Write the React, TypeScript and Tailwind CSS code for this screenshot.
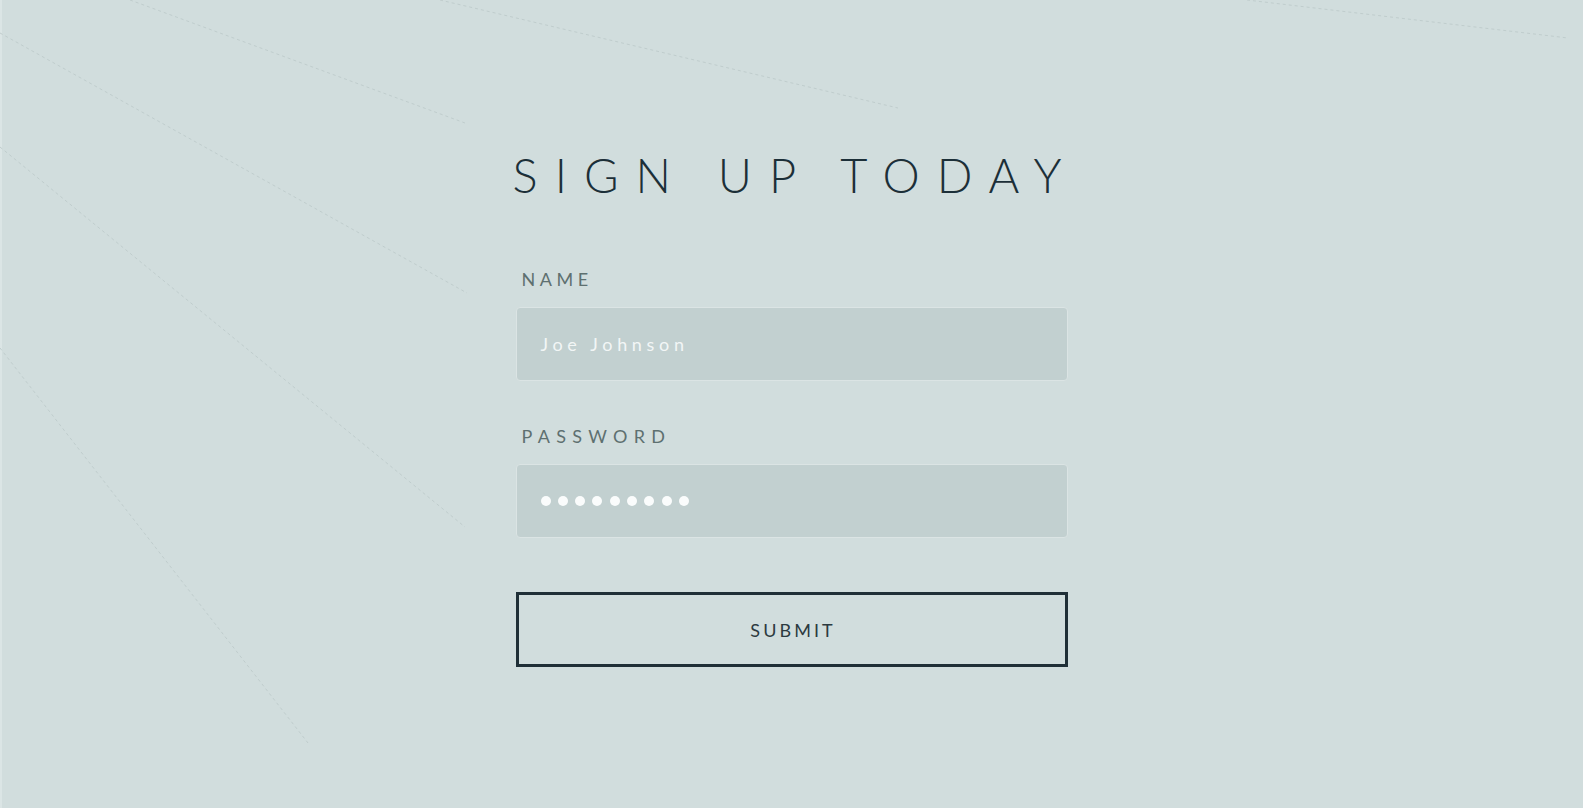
import React from "react";

const lines: [number, number, number, number][] = [
  [130, 0, 465, 123],
  [0, 33, 467, 293],
  [0, 147, 465, 527],
  [0, 348, 308, 743],
  [440, 0, 898, 108],
  [1247, 0, 1568, 38],
];

export default function App() {
  return (
    <div
      className="relative h-[808px] w-full overflow-hidden bg-[#d1dddd]"
      style={{ fontFamily: "Lato, 'Noto Sans', sans-serif" }}
    >
      <div className="absolute inset-y-0 left-0 w-[2px] bg-[#dbe5e5]" />
      <svg
        className="pointer-events-none absolute inset-0 h-full w-full"
        viewBox="0 0 1583 808"
        preserveAspectRatio="none"
      >
        {lines.map(([x1, y1, x2, y2], i) => (
          <line
            key={i}
            x1={x1}
            y1={y1}
            x2={x2}
            y2={y2}
            stroke="#c0cdcd"
            strokeWidth="1"
            strokeDasharray="3 3"
          />
        ))}
      </svg>

      <div className="relative flex flex-col items-center pt-[152px]">
        <h1 className="ml-[8px] h-[47px] text-[47px] font-light leading-none tracking-[17px] text-[#1c2f38]">
          SIGN UP TODAY
        </h1>

        <form className="mt-[71px] flex w-[552px] flex-col">
          <label className="h-[18px] pl-[6px] text-[18px] leading-none tracking-[0.25em] text-[#5e7070]">
            NAME
          </label>
          <div className="mt-[19px] flex h-[74px] items-center rounded-[4px] border border-[#dbe4e4] bg-[#c2d0d0] px-[24px]">
            <span className="text-[18px] leading-none tracking-[0.26em] text-[#f2f6f6]">
              Joe Johnson
            </span>
          </div>

          <label className="mt-[46px] h-[18px] pl-[6px] text-[18px] leading-none tracking-[0.35em] text-[#5e7070]">
            PASSWORD
          </label>
          <div className="mt-[19px] flex h-[74px] items-center gap-[7.3px] rounded-[4px] border border-[#dbe4e4] bg-[#c2d0d0] px-[24px]">
            {Array.from({ length: 9 }).map((_, i) => (
              <span key={i} className="h-[10px] w-[10px] rounded-full bg-[#fafcfc]" />
            ))}
          </div>

          <button
            type="button"
            className="mt-[54px] flex h-[75px] items-center justify-center border-[3px] border-[#1f2f37] bg-transparent text-[18px] font-normal leading-none tracking-[0.17em] text-[#2c3a40]"
          >
            <span className="ml-[0.17em]">SUBMIT</span>
          </button>
        </form>
      </div>
    </div>
  );
}
